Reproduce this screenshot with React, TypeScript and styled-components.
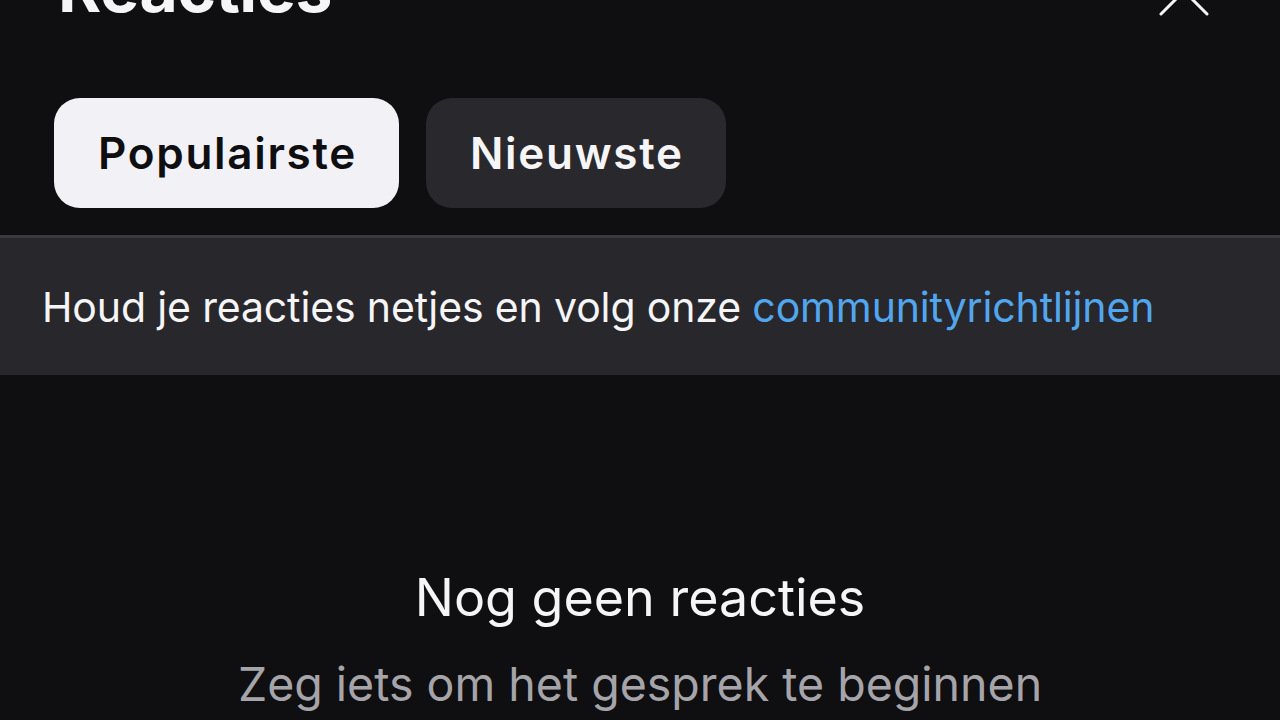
import React from "react";
import styled, { createGlobalStyle } from "styled-components";

const Global = createGlobalStyle`
  html, body { margin: 0; padding: 0; background: #0f0e11; }
  * { box-sizing: border-box; }
`;

const Page = styled.div`
  width: 1280px;
  height: 720px;
  overflow: hidden;
  background: #0f0e11;
  font-family: Inter, "Noto Sans", sans-serif;
  color: #f5f5f7;
  display: flex;
  flex-direction: column;
`;

const Header = styled.div`
  display: flex;
  justify-content: space-between;
  align-items: flex-start;
  margin-top: -45px;
  padding: 0 70px 0 58px;
`;

const Title = styled.h1`
  margin: 0;
  font-size: 66px;
  line-height: 66px;
  font-weight: 700;
  letter-spacing: -0.5px;
  color: #f5f5f7;
`;

const CloseButton = styled.button`
  margin-top: 10px;
  width: 52px;
  height: 52px;
  padding: 0;
  border: none;
  background: transparent;
  display: flex;
`;

const Tabs = styled.div`
  display: flex;
  gap: 27px;
  margin-top: 77px;
  padding-left: 54px;
`;

const Tab = styled.button<{ $active?: boolean }>`
  height: 110px;
  padding: 0 42px 0 44px;
  border: none;
  border-radius: 26px;
  background: ${(p) => (p.$active ? "#f2f2f6" : "#29282c")};
  color: ${(p) => (p.$active ? "#0f0e11" : "#f5f5f7")};
  font-family: Inter, "Noto Sans", sans-serif;
  font-size: 44px;
  letter-spacing: 1.7px;
  font-weight: 600;
  display: flex;
  align-items: center;
`;

const Banner = styled.div`
  margin-top: 27px;
  height: 140px;
  border-top: 3px solid #3b3a3e;
  background: #28272b;
  display: flex;
  align-items: center;
  padding-left: 42px;
  font-size: 41px;
  letter-spacing: -0.14px;
  line-height: 50px;
  color: #f5f5f7;
`;

const Link = styled.span`
  color: #52a6ee;
`;

const Empty = styled.div`
  padding-top: 191px;
  display: flex;
  flex-direction: column;
  align-items: center;
`;

const EmptyTitle = styled.div`
  font-size: 52px;
  line-height: 64px;
  color: #f5f5f7;
`;

const EmptyText = styled.div`
  margin-top: 24px;
  font-size: 46.5px;
  line-height: 60px;
  color: #a5a4a9;
`;

export default function App() {
  return (
    <Page>
      <Global />
      <Header>
        <Title>Reacties</Title>
        <CloseButton aria-label="Sluiten">
          <svg width="52" height="52" viewBox="0 0 52 52">
            <path d="M3 3 L49 49 M49 3 L3 49" stroke="#f5f5f7" strokeWidth="3" strokeLinecap="round" />
          </svg>
        </CloseButton>
      </Header>
      <Tabs>
        <Tab $active>Populairste</Tab>
        <Tab>Nieuwste</Tab>
      </Tabs>
      <Banner>
        <span>
          Houd je reacties netjes en volg onze <Link>communityrichtlijnen</Link>
        </span>
      </Banner>
      <Empty>
        <EmptyTitle>Nog geen reacties</EmptyTitle>
        <EmptyText>Zeg iets om het gesprek te beginnen</EmptyText>
      </Empty>
    </Page>
  );
}
